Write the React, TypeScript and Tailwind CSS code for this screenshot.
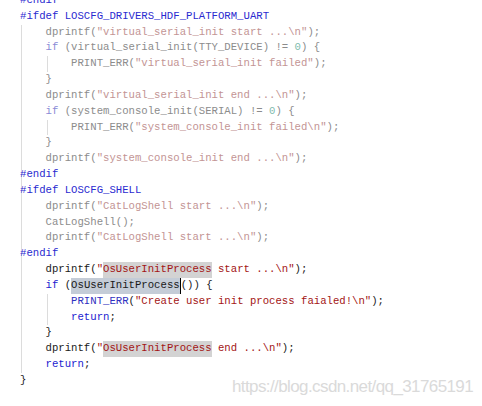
type Tok = [string, string];

const PP = 'text-[#2a2ad0]';
const INA = 'text-[#8c8c8c]';
const INA_STR = 'text-[#c39494]';
const INA_KW = 'text-[#8b8bd6]';
const INA_NUM = 'text-[#7fbcae]';
const ACT = 'text-[#1a1a1a]';
const STR = 'text-[#a31515]';
const KW = 'text-[#1c1cd0]';
const MACRO = 'text-[#2f2fc0]';
const HL = 'bg-[#d3d3d3]';
const HL_CUR = 'bg-[#c4ccd7]';

const lines: Tok[][] = [
  [['#endif', PP]],
  [['#ifdef LOSCFG_DRIVERS_HDF_PLATFORM_UART', PP]],
  [['    dprintf(', INA], ['"virtual_serial_init start ...\\n"', INA_STR], [');', INA]],
  [['    ', INA], ['if', INA_KW], [' (virtual_serial_init(TTY_DEVICE) != ', INA], ['0', INA_NUM], [') {', INA]],
  [['        PRINT_ERR(', INA], ['"virtual_serial_init failed"', INA_STR], [');', INA]],
  [['    }', INA]],
  [['    dprintf(', INA], ['"virtual_serial_init end ...\\n"', INA_STR], [');', INA]],
  [['    ', INA], ['if', INA_KW], [' (system_console_init(SERIAL) != ', INA], ['0', INA_NUM], [') {', INA]],
  [['        PRINT_ERR(', INA], ['"system_console_init failed\\n"', INA_STR], [');', INA]],
  [['    }', INA]],
  [['    dprintf(', INA], ['"system_console_init end ...\\n"', INA_STR], [');', INA]],
  [['#endif', PP]],
  [['#ifdef LOSCFG_SHELL', PP]],
  [['    dprintf(', INA], ['"CatLogShell start ...\\n"', INA_STR], [');', INA]],
  [['    CatLogShell();', INA]],
  [['    dprintf(', INA], ['"CatLogShell start ...\\n"', INA_STR], [');', INA]],
  [['#endif', PP]],
  [['    dprintf(', ACT], ['"', STR], ['OsUserInitProcess', `${STR} ${HL}`], [' start ...\\n"', STR], [');', ACT]],
  [['    ', ACT], ['if', KW], [' (', ACT], ['OsUserInitProcess', `${ACT} ${HL_CUR} border-r border-black`], ['()) {', ACT]],
  [['        ', ACT], ['PRINT_ERR', MACRO], ['(', ACT], ['"Create user init process faialed!\\n"', STR], [');', ACT]],
  [['        ', ACT], ['return', KW], [';', ACT]],
  [['    }', ACT]],
  [['    dprintf(', ACT], ['"', STR], ['OsUserInitProcess', `${STR} ${HL}`], [' end ...\\n"', STR], [');', ACT]],
  [['    ', ACT], ['return', KW], [';', ACT]],
  [['}', ACT]],
];

// indent guides: [left px, first line, last line]
const guides: [number, number, number][] = [
  [21, 2, 23],
  [47, 4, 4],
  [47, 8, 8],
  [47, 19, 20],
];

const LH = 15.83;

export default function App() {
  return (
    <div className="relative w-[482px] h-[406px] overflow-hidden bg-white">
      <div className="relative mt-[-7px] pl-[20px] font-['Liberation_Mono',monospace] text-[10.65px] leading-[15.83px] whitespace-pre">
        {guides.map(([x, a, b], i) => (
          <div
            key={i}
            className="absolute w-px bg-[#dcdcdc]"
            style={{ left: x, top: a * LH, height: (b - a + 1) * LH }}
          />
        ))}
        {lines.map((toks, i) => (
          <div key={i} className="relative h-[15.83px]">
            {toks.map(([t, c], j) => (
              <span key={j} className={`inline-block ${c}`}>
                {t}
              </span>
            ))}
          </div>
        ))}
      </div>
      <div className="absolute left-[232px] top-[374px] font-['Liberation_Sans',sans-serif] text-[17px] tracking-[-0.6px] text-[#dadada] whitespace-nowrap">
        https://blog.csdn.net/qq_31765191
      </div>
    </div>
  );
}
